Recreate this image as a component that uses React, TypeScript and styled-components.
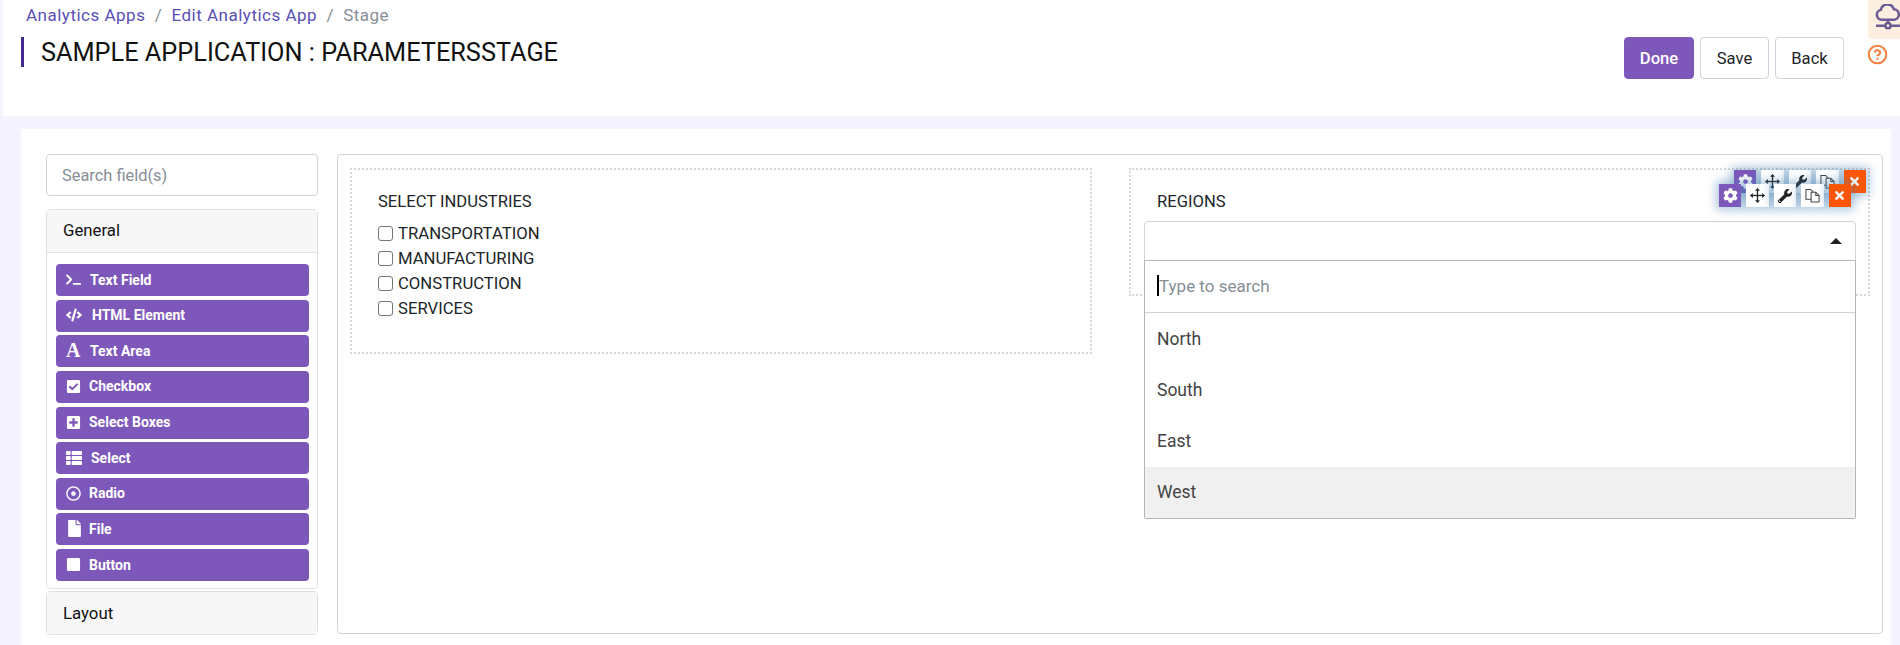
import type { ReactNode } from "react";
import styled, { createGlobalStyle } from "styled-components";
import {
  FaCheckSquare,
  FaCode,
  FaCog,
  FaFile,
  FaPlusSquare,
  FaRegDotCircle,
  FaStop,
  FaTerminal,
  FaThList,
  FaTimes,
  FaWrench,
} from "react-icons/fa";
import { CircleHelp } from "lucide-react";

const PURPLE = "#7e57bb";

const GlobalStyle = createGlobalStyle`
  html, body {
    margin: 0;
    padding: 0;
    height: 645px;
    overflow: hidden;
    background: #f5f4fe;
    font-family: Roboto, "Liberation Sans", sans-serif;
    color: #212529;
  }
  * { box-sizing: border-box; }
`;

const Page = styled.div`
  width: 1900px;
  height: 645px;
  display: flex;
  flex-direction: column;
`;

const Header = styled.header`
  position: relative;
  height: 116px;
  margin-left: 3px;
  background: #fff;
  display: flex;
  justify-content: space-between;
  align-items: flex-start;
  padding: 0 56px 0 18px;
`;

const TitleBlock = styled.div`
  display: flex;
  flex-direction: column;
`;

const Crumbs = styled.nav`
  display: flex;
  height: 28px;
  padding: 3px 0 0 5px;
  font-size: 17px;
  line-height: 24px;
  letter-spacing: 0.5px;
  color: #868e96;
`;

const Crumb = styled.span`
  color: #5a4fb5;
`;

const Sep = styled.span`
  padding: 0 9.25px;
  color: #868e96;
`;

const Title = styled.h1`
  margin: 9px 0 0;
  height: 30px;
  padding: 1px 0 0 17px;
  border-left: 3px solid #42298f;
  font-size: 25.3px;
  line-height: 30px;
  font-weight: 400;
  color: #111;
  white-space: nowrap;
`;

const Actions = styled.div`
  display: flex;
  gap: 6px;
  margin-top: 37px;
`;

const ActionButton = styled.button<{ $primary?: boolean }>`
  width: ${(p) => (p.$primary ? 70 : 69)}px;
  height: 42px;
  border-radius: 4px;
  border: 1px solid ${(p) => (p.$primary ? PURPLE : "#ced4da")};
  background: ${(p) => (p.$primary ? PURPLE : "#fff")};
  color: ${(p) => (p.$primary ? "#fff" : "#212529")};
  font-family: inherit;
  font-size: 16.6px;
  font-weight: ${(p) => (p.$primary ? 500 : 400)};
  padding: 0;
`;

const CloudTab = styled.div`
  position: absolute;
  right: 0;
  top: 0;
  width: 32px;
  height: 39px;
  background: #fcefdf;
  border-bottom-left-radius: 4px;
  padding: 4px 0 0 7px;
  color: #6a5a96;
  overflow: hidden;
`;

const HelpIcon = styled.div`
  position: absolute;
  right: 12px;
  top: 44px;
  color: #f5813f;
  line-height: 0;
`;

const Card = styled.main`
  flex: 1;
  margin: 13px 9px 0 21px;
  background: #fff;
  display: flex;
  gap: 19px;
  padding: 25px 8px 11px 25px;
  min-height: 0;
`;

const Sidebar = styled.aside`
  width: 272px;
  flex: none;
  display: flex;
  flex-direction: column;
`;

const Search = styled.input`
  height: 42px;
  width: 100%;
  flex: none;
  border: 1px solid #ced4da;
  border-radius: 4px;
  padding: 0 15px;
  font-family: inherit;
  font-size: 16.4px;
  margin-bottom: 12.5px;
  &::placeholder {
    color: #868e96;
    opacity: 1;
  }
`;

const Group = styled.section<{ $spaced?: boolean }>`
  border: 1px solid #dfe1e4;
  border-radius: 4px;
  margin-top: ${(p) => (p.$spaced ? 2 : 0)}px;
`;

const GroupTitle = styled.div<{ $open?: boolean }>`
  height: ${(p) => (p.$open ? 43 : 42)}px;
  background: #f7f7f7;
  padding: 0 0 ${(p) => (p.$open ? 1 : 0)}px 16px;
  display: flex;
  align-items: center;
  font-size: 16.8px;
  color: #111;
  border-bottom: ${(p) => (p.$open ? "1px solid #dfe1e4" : "none")};
`;

const FieldList = styled.div`
  display: flex;
  flex-direction: column;
  gap: 3.625px;
  padding: 11.5px 8px 6.5px 9px;
`;

const FieldButton = styled.div`
  height: 32px;
  background: ${PURPLE};
  border-radius: 4px;
  color: #fff;
  display: flex;
  align-items: center;
  padding: 0 0 1px 10px;
  font-size: 14px;
  font-weight: 700;
`;

const FieldIcon = styled.span<{ $w: number; $size: number }>`
  width: ${(p) => p.$w}px;
  flex: none;
  display: flex;
  align-items: center;
  font-size: ${(p) => p.$size}px;
`;

const SerifA = styled.span`
  font-family: "Liberation Serif", serif;
  font-size: 20px;
  font-weight: 700;
`;

const Builder = styled.div`
  flex: 1;
  border: 1px solid #ced4da;
  border-radius: 4px;
  padding: 13px 12px;
  display: flex;
  gap: 37px;
  align-items: flex-start;
`;

const DropBox = styled.div<{ $w: number; $h: number }>`
  position: relative;
  width: ${(p) => p.$w}px;
  height: ${(p) => p.$h}px;
  border: 2px dotted #d4d6d8;
  padding: 22px 26px 0;
`;

const Label = styled.div`
  font-size: 16.6px;
  line-height: 20px;
  color: #212529;
`;

const CheckRow = styled.label`
  display: flex;
  align-items: center;
  height: 25px;
  gap: 5px;
  font-size: 16.7px;
  color: #212529;
`;

const Box = styled.span`
  width: 15px;
  height: 15px;
  border: 1px solid #767676;
  border-radius: 3px;
  background: #fff;
`;

const Checks = styled.div`
  margin-top: 9px;
`;

const SelectBox = styled.div`
  position: absolute;
  left: 13px;
  top: 51px;
  width: 712px;
  height: 40px;
  border: 1px solid #ced4da;
  border-radius: 4px 4px 0 0;
  background: #fff;
`;

const Caret = styled.span`
  position: absolute;
  right: 13px;
  top: 16px;
  border-left: 6px solid transparent;
  border-right: 6px solid transparent;
  border-bottom: 6px solid #222;
`;

const Menu = styled.div`
  position: absolute;
  left: 13px;
  top: 90px;
  width: 712px;
  height: 259px;
  background: #fff;
  border: 1px solid #b5b5b5;
  border-radius: 0 0 2px 2px;
  z-index: 2;
`;

const MenuSearch = styled.div`
  height: 52px;
  border-bottom: 1px solid #ced4da;
  display: flex;
  align-items: center;
  padding: 0 0 2px 12px;
  font-size: 17px;
  color: #868e96;
`;

const Cursor = styled.span`
  width: 2px;
  height: 21px;
  background: #000;
`;

const MenuItem = styled.div<{ $active?: boolean }>`
  height: 51.25px;
  display: flex;
  align-items: center;
  padding-left: 12px;
  font-size: 17.5px;
  color: #444;
  background: ${(p) => (p.$active ? "#f0f0f0" : "#fff")};
`;

const Toolbar = styled.div<{ $top: number; $right: number }>`
  position: absolute;
  top: ${(p) => p.$top}px;
  right: ${(p) => p.$right}px;
  display: flex;
  gap: 5px;
  z-index: 3;
`;

const ToolButton = styled.span<{ $kind?: "cog" | "del" }>`
  width: 22.4px;
  height: 23px;
  display: flex;
  align-items: center;
  justify-content: center;
  font-size: ${(p) => (p.$kind === "del" ? 13 : p.$kind === "cog" ? 15 : 14)}px;
  color: ${(p) => (p.$kind ? "#fff" : "#222")};
  background: ${(p) =>
    p.$kind === "cog" ? PURPLE : p.$kind === "del" ? "#fb5607" : "#fff"};
  box-shadow: 0 0 10px 3px rgba(70, 130, 180, 0.45);
`;

const CloudIcon = () => (
  <svg width="26" height="26" viewBox="0 0 24 24" fill="none" stroke="currentColor" strokeWidth="2.3">
    <path d="M6 14.5a4.6 4.6 0 0 1-.6-9.1 6.2 6.2 0 0 1 12-.6 4.9 4.9 0 0 1 .6 9.7z" />
    <path d="M12 14.5v3M1 20h8M15 20h8" />
    <circle cx="12" cy="20" r="2.4" />
  </svg>
);

const MoveIcon = () => (
  <svg width="15" height="15" viewBox="0 0 16 16" fill="#222" stroke="none">
    <rect x="7.3" y="2" width="1.4" height="12" />
    <rect x="2" y="7.3" width="12" height="1.4" />
    <path d="M8 0l2.6 3H5.4zM8 16l-2.6-3h5.2zM0 8l3-2.6v5.2zM16 8l-3 2.6V5.4z" />
  </svg>
);

const CopyIcon = () => (
  <svg width="15" height="15" viewBox="0 0 16 16" fill="#fff" stroke="#444" strokeWidth="1.1">
    <path d="M1 1.5h5l3 3v7.5H1z" />
    <path d="M6.5 4.5h5l3.5 3.5v7H6.5z" />
    <path d="M11.5 4.5V8H15" fill="none" />
  </svg>
);

const FIELDS: { label: string; w: number; size: number; icon: ReactNode }[] = [
  { label: "Text Field", w: 24, size: 15, icon: <FaTerminal /> },
  { label: "HTML Element", w: 26, size: 16, icon: <FaCode /> },
  { label: "Text Area", w: 24, size: 15, icon: <SerifA>A</SerifA> },
  { label: "Checkbox", w: 23, size: 15, icon: <FaCheckSquare /> },
  { label: "Select Boxes", w: 23, size: 15, icon: <FaPlusSquare /> },
  { label: "Select", w: 25, size: 16, icon: <FaThList /> },
  { label: "Radio", w: 23, size: 15, icon: <FaRegDotCircle /> },
  { label: "File", w: 23, size: 17, icon: <FaFile /> },
  { label: "Button", w: 23, size: 15, icon: <FaStop /> },
];

const INDUSTRIES = ["TRANSPORTATION", "MANUFACTURING", "CONSTRUCTION", "SERVICES"];
const REGIONS = ["North", "South", "East", "West"];

const ComponentTools = ({ top, right }: { top: number; right: number }) => (
  <Toolbar $top={top} $right={right}>
    <ToolButton $kind="cog">
      <FaCog />
    </ToolButton>
    <ToolButton>
      <MoveIcon />
    </ToolButton>
    <ToolButton>
      <FaWrench />
    </ToolButton>
    <ToolButton>
      <CopyIcon />
    </ToolButton>
    <ToolButton $kind="del">
      <FaTimes />
    </ToolButton>
  </Toolbar>
);

export default function App() {
  return (
    <Page>
      <GlobalStyle />
      <Header>
        <TitleBlock>
          <Crumbs>
            <Crumb>Analytics Apps</Crumb>
            <Sep>/</Sep>
            <Crumb>Edit Analytics App</Crumb>
            <Sep>/</Sep>
            <span>Stage</span>
          </Crumbs>
          <Title>SAMPLE APPLICATION : PARAMETERSSTAGE</Title>
        </TitleBlock>
        <Actions>
          <ActionButton $primary>Done</ActionButton>
          <ActionButton>Save</ActionButton>
          <ActionButton>Back</ActionButton>
        </Actions>
        <CloudTab>
          <CloudIcon />
        </CloudTab>
        <HelpIcon>
          <CircleHelp size={21} strokeWidth={2.3} />
        </HelpIcon>
      </Header>
      <Card>
        <Sidebar>
          <Search placeholder="Search field(s)" />
          <Group>
            <GroupTitle $open>General</GroupTitle>
            <FieldList>
              {FIELDS.map((f) => (
                <FieldButton key={f.label}>
                  <FieldIcon $w={f.w} $size={f.size}>
                    {f.icon}
                  </FieldIcon>
                  {f.label}
                </FieldButton>
              ))}
            </FieldList>
          </Group>
          <Group $spaced>
            <GroupTitle>Layout</GroupTitle>
          </Group>
        </Sidebar>
        <Builder>
          <DropBox $w={742} $h={186}>
            <Label>SELECT INDUSTRIES</Label>
            <Checks>
              {INDUSTRIES.map((name) => (
                <CheckRow key={name}>
                  <Box />
                  {name}
                </CheckRow>
              ))}
            </Checks>
          </DropBox>
          <DropBox $w={741} $h={128}>
            <Label>REGIONS</Label>
            <SelectBox>
              <Caret />
            </SelectBox>
            <Menu>
              <MenuSearch>
                <Cursor />
                Type to search
              </MenuSearch>
              {REGIONS.map((r) => (
                <MenuItem key={r} $active={r === "West"}>
                  {r}
                </MenuItem>
              ))}
            </Menu>
            <ComponentTools top={0} right={2} />
            <ComponentTools top={14} right={17} />
          </DropBox>
        </Builder>
      </Card>
    </Page>
  );
}
